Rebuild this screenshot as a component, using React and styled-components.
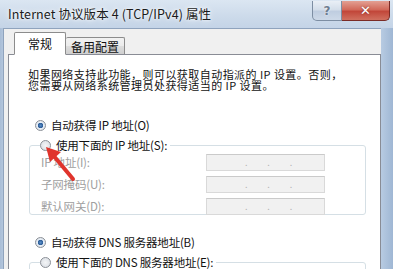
import React from "react";
import styled, { createGlobalStyle } from "styled-components";

const GlobalStyle = createGlobalStyle`
  html, body {
    margin: 0;
    padding: 0;
    overflow: hidden;
    background: #fff;
  }
  body {
    font-family: "Noto Sans CJK SC", "DejaVu Sans", sans-serif;
  }
`;

const Window = styled.div`
  position: relative;
  width: 393px;
  height: 269px;
  overflow: hidden;
  display: flex;
  flex-direction: column;
  background: linear-gradient(90deg, #a9bdd6 0%, #c3d4e8 2%, #cddbeb 60%, #bfd1e6 96%, #9fb7d4 100%);
`;

const TitleBar = styled.div`
  height: 28px;
  flex: none;
  display: flex;
  align-items: flex-start;
  padding-left: 8px;
  background: linear-gradient(180deg, #dbe6f2 0%, #ccdaea 60%, #c4d4e7 100%);
`;

const Title = styled.div`
  flex: 1;
  font-size: 12.5px;
  line-height: 28px;
  color: #1b1b1b;
  text-shadow: 0 0 6px #fff, 0 0 3px #fff;
  letter-spacing: 0.1px;
`;

const CaptionButtons = styled.div`
  display: flex;
  margin-right: 3px;
  margin-top: 1px;
`;

const CaptionButton = styled.div`
  height: 19px;
  width: ${(p) => (p.$close ? "47px" : "28px")};
  display: flex;
  align-items: center;
  justify-content: center;
  border: 1px solid ${(p) => (p.$close ? "#7a2b26" : "#7d8ea3")};
  border-top: none;
  border-left: ${(p) => (p.$close ? "none" : "1px solid #7d8ea3")};
  border-radius: ${(p) => (p.$close ? "0 0 5px 0" : "0 0 0 5px")};
  background: ${(p) =>
    p.$close
      ? "linear-gradient(180deg, #e3a093 0%, #d26a5b 45%, #c2473a 55%, #d0705f 100%)"
      : "linear-gradient(180deg, #e9eff6 0%, #d4deea 45%, #bfcde0 55%, #cdd9e8 100%)"};
  color: ${(p) => (p.$close ? "#fff" : "#6d7d90")};
  font-family: "DejaVu Sans", sans-serif;
  font-weight: bold;
  font-size: ${(p) => (p.$close ? "13px" : "12px")};
  text-shadow: ${(p) => (p.$close ? "0 0 2px #7a2b26" : "0 0 2px #fff")};
`;

const Client = styled.div`
  flex: 1;
  margin: 0 12px 0 3px;
  background: #f0f0f0;
  border-top: 1px solid #8fa3bd;
  border-left: 1px solid #8fa3bd;
  padding: 4px 0 0 4px;
  display: flex;
  flex-direction: column;
`;

const Tabs = styled.div`
  display: flex;
  align-items: flex-end;
  padding-left: 6px;
  height: 21px;
  position: relative;
  z-index: 1;
`;

const Tab = styled.div`
  height: ${(p) => (p.$active ? "21px" : "16px")};
  padding: 0 ${(p) => (p.$active ? "13px" : "5px")};
  display: flex;
  align-items: center;
  font-size: 12px;
  color: #111;
  border: 1px solid #8c8c8c;
  border-bottom: ${(p) => (p.$active ? "1px solid #fff" : "none")};
  border-left: ${(p) => (p.$active ? "1px solid #8c8c8c" : "none")};
  border-radius: 2px 2px 0 0;
  background: ${(p) =>
    p.$active ? "#fff" : "linear-gradient(180deg, #f2f2f2 0%, #ebebeb 50%, #dddddd 51%, #cfcfcf 100%)"};
  margin-bottom: ${(p) => (p.$active ? "-1px" : "0")};
`;

const Panel = styled.div`
  flex: 1;
  background: #fff;
  border: 1px solid #898c95;
  border-bottom: none;
  padding: 12px 0 0 19px;
  font-size: 11.5px;
  color: #111;
`;

const IntroLine = styled.div`
  font-size: 11px;
  line-height: 11px;
  height: 11px;
  letter-spacing: 0.45px;
  white-space: nowrap;
`;

const Spacer = styled.div`
  height: ${(p) => p.$h}px;
`;

const RadioRow = styled.div`
  display: flex;
  align-items: center;
  height: 20px;
  margin-left: ${(p) => p.$indent}px;
  white-space: nowrap;
  letter-spacing: -0.2px;
  background: ${(p) => (p.$legend ? "#fff" : "transparent")};
  padding-right: ${(p) => (p.$legend ? "3px" : "0")};
`;

const RadioDot = styled.span`
  width: 11px;
  height: 11px;
  flex: none;
  border-radius: 50%;
  margin-right: 5px;
  box-sizing: border-box;
  border: 1px solid #8b9097;
  background: radial-gradient(circle at 50% 50%, ${(p) =>
    p.$checked
      ? "#5a8fc7 0, #2a5a96 2.5px, #e6eef7 3px, #dfe4ea 5px"
      : "#f4f5f7 0, #dde1e6 5px"});
`;

const Group = styled.fieldset`
  margin: 0 0 0 1px;
  width: 337px;
  box-sizing: border-box;
  height: ${(p) => p.$height}px;
  border: 1px solid #d5dfe5;
  border-radius: 3px;
  padding: 0 0 0 11px;

  legend {
    padding: 0;
    margin-left: -1px;
  }
`;

const Fields = styled.div`
  margin-top: -4px;
`;

const Field = styled.div`
  display: flex;
  align-items: center;
  height: 22px;
  color: #a0a0a0;
  letter-spacing: -0.2px;
`;

const FieldLabel = styled.span`
  width: 165px;
`;

const IpBox = styled.div`
  width: 119px;
  height: 17px;
  box-sizing: border-box;
  border: 1px solid #d9d9d9;
  border-top-color: #cacaca;
  background: #f1f1f1;
  display: flex;
  justify-content: space-around;
  align-items: flex-end;
  padding: 0 22px 3px 28px;
  color: #b5b5b5;
  font-size: 9px;
  line-height: 9px;
`;

const Arrow = styled.svg`
  position: absolute;
  left: 38px;
  top: 138px;
`;

function Radio({ checked, children, legend }) {
  return (
    <RadioRow $legend={legend} $indent={legend ? 0 : 7}>
      <RadioDot $checked={checked} />
      {children}
    </RadioRow>
  );
}

function IpField({ label }) {
  return (
    <Field>
      <FieldLabel>{label}</FieldLabel>
      <IpBox>
        <span>.</span>
        <span>.</span>
        <span>.</span>
      </IpBox>
    </Field>
  );
}

export default function App() {
  return (
    <>
      <GlobalStyle />
      <Window>
        <TitleBar>
          <Title>Internet 协议版本 4 (TCP/IPv4) 属性</Title>
          <CaptionButtons>
            <CaptionButton>?</CaptionButton>
            <CaptionButton $close>✕</CaptionButton>
          </CaptionButtons>
        </TitleBar>
        <Client>
          <Tabs>
            <Tab $active>常规</Tab>
            <Tab>备用配置</Tab>
          </Tabs>
          <Panel>
            <Spacer $h={2} />
            <IntroLine>如果网络支持此功能，则可以获取自动指派的 IP 设置。否则，</IntroLine>
            <IntroLine>您需要从网络系统管理员处获得适当的 IP 设置。</IntroLine>
            <Spacer $h={24} />
            <Radio checked>自动获得 IP 地址(O)</Radio>
            <Group $height={80}>
              <legend>
                <Radio legend>使用下面的 IP 地址(S):</Radio>
              </legend>
              <Fields>
                <IpField label="IP 地址(I):" />
                <IpField label="子网掩码(U):" />
                <IpField label="默认网关(D):" />
              </Fields>
            </Group>
            <Spacer $h={17} />
            <Radio checked>自动获得 DNS 服务器地址(B)</Radio>
            <Group $height={40}>
              <legend>
                <Radio legend>使用下面的 DNS 服务器地址(E):</Radio>
              </legend>
            </Group>
          </Panel>
        </Client>
        <Arrow width="44" height="48" viewBox="0 0 44 48">
          <line x1="35" y1="41" x2="15" y2="17" stroke="#e0342c" strokeWidth="4" strokeLinecap="round" />
          <polygon points="8,9 23,14 12,24" fill="#e0342c" />
        </Arrow>
      </Window>
    </>
  );
}
